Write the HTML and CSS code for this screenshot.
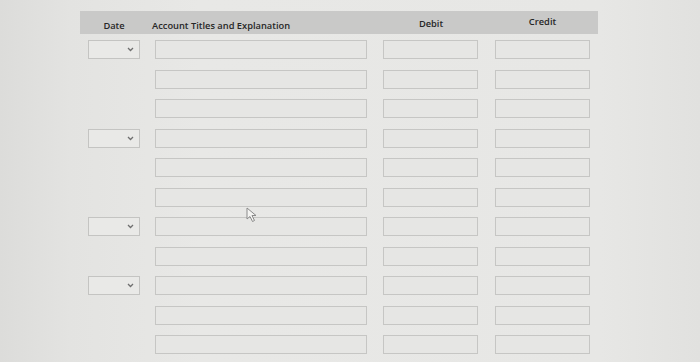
FILE: index.html
```html
<!DOCTYPE html>
<html lang="en">
<head>
    <meta charset="UTF-8">
    <meta name="viewport" content="width=device-width, initial-scale=1.0">
    <title>Journal Entry</title>
    <link rel="stylesheet" href="styles.css">
</head>
<body>
    <div class="sheet">
        <div class="journal">
            <div class="head">
                <div class="h-date">Date</div>
                <div class="h-account">Account Titles and Explanation</div>
                <div class="h-debit">Debit</div>
                <div class="h-credit">Credit</div>
            </div>

            <div class="rows" id="rows"></div>
        </div>
    </div>

    <!-- mouse pointer caught in the photo -->
    <svg class="pointer" width="12" height="16" viewBox="0 0 12 16">
        <path d="M1 1 L1 12 L4 9.5 L6.5 14.5 L8.5 13.5 L6 8.5 L10 8.5 Z" fill="#f4f4f2" stroke="#8a8a8a" stroke-width="1"/>
    </svg>

    <script>
        // rows that get a date picker
        const dateRows = [0, 3, 6, 8];
        const rows = document.getElementById("rows");

        for (let i = 0; i < 11; i++) {
            const row = document.createElement("div");
            row.className = "row";

            let dateCell = '<div class="c-date"></div>';
            if (dateRows.includes(i)) {
                dateCell = `<div class="c-date"><div class="select">
                    <svg width="7" height="5" viewBox="0 0 7 5"><path d="M1 1 L3.5 3.5 L6 1" fill="none" stroke="#6f6f6f" stroke-width="1.3"/></svg>
                </div></div>`;
            }

            row.innerHTML = dateCell +
                '<div class="c-account"><input type="text" class="field wide"></div>' +
                '<div class="c-debit"><input type="text" class="field"></div>' +
                '<div class="c-credit"><input type="text" class="field"></div>';
            rows.appendChild(row);
        }
    </script>
</body>
</html>
```

FILE: styles.css
```css
        body {
            margin: 0;
            background-color: #e4e4e2;
            font-family: "Open Sans", "DejaVu Sans", sans-serif;
            height: 362px;
            overflow: hidden;
        }

        .sheet {
            height: 362px;
            background: linear-gradient(to right, #dcdcda 0, #e3e3e1 70px, #e8e8e6 200px, #e7e7e5 600px, #e1e1df 700px);
            padding-top: 11px;
            box-sizing: border-box;
        }

        .journal {
            margin-left: 80px;
            width: 518px;
        }

        .head,
        .row {
            display: grid;
            grid-template-columns: 68px 227px 112px 111px;
        }

        .head {
            height: 23px;
            background-color: #c9c9c8;
            align-items: center;
            font-size: 9.3px;
            font-weight: 600;
            color: #262626;
        }

        .h-date {
            text-align: center;
            padding-top: 6px;
        }

        .h-account {
            padding-left: 4px;
            padding-top: 5px;
        }

        .h-debit {
            text-align: center;
            padding-left: 0;
            padding-top: 1px;
        }

        .h-credit {
            text-align: center;
            padding-left: 0;
            padding-bottom: 3px;
        }

        .rows {
            padding-top: 1px;
        }

        .row {
            height: 29.5px;
            align-items: center;
        }

        .c-date {
            padding-left: 8px;
        }

        .c-account {
            padding-left: 7px;
        }

        .c-debit,
        .c-credit {
            padding-left: 8px;
        }

        .field {
            display: block;
            width: 95px;
            height: 19px;
            box-sizing: border-box;
            border: 1px solid #c6c6c4;
            background-color: #e6e6e4;
            margin: 0;
            padding: 0;
        }

        .field.wide {
            width: 212px;
        }

        .select {
            width: 52px;
            height: 19px;
            box-sizing: border-box;
            border: 1px solid #c4c4c2;
            background-color: #e9e9e7;
            display: flex;
            align-items: center;
            justify-content: flex-end;
            padding-right: 5px;
        }

        .pointer {
            position: absolute;
            left: 246px;
            top: 207px;
        }
```
